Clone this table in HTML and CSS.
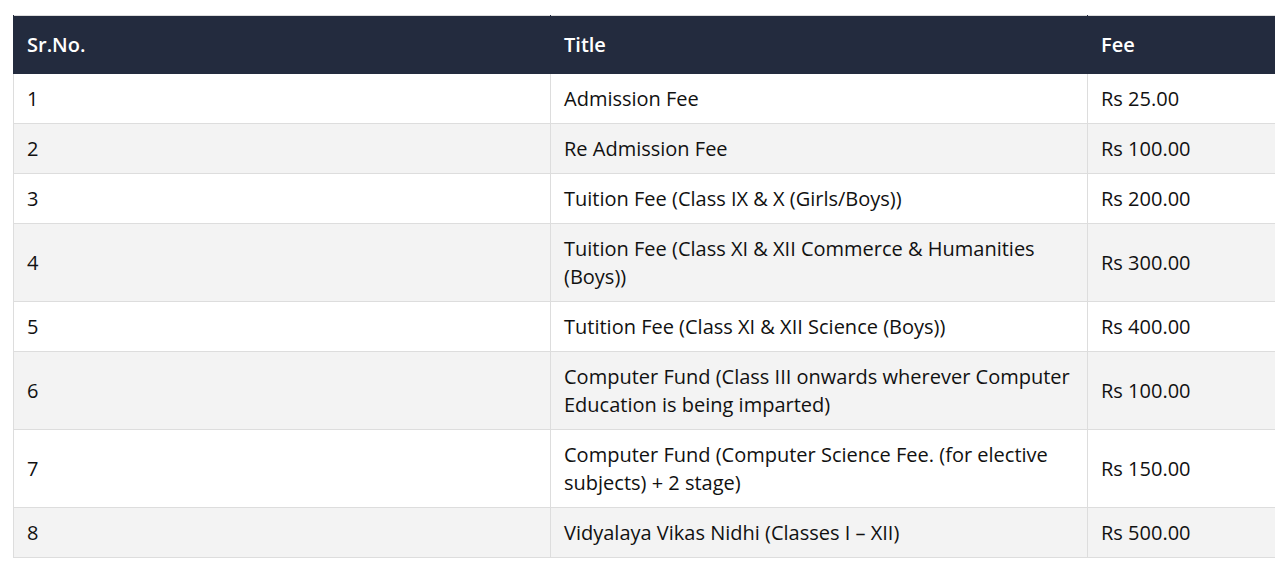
FILE: index.html
```html
<!DOCTYPE html>
<html>
<head>
<meta charset="utf-8">
<link rel="stylesheet" href="styles.css">
</head>
<body>
<table class="fees">
  <thead>
    <tr><th class="c1">Sr.No.</th><th class="c2">Title</th><th class="c3">Fee</th></tr>
  </thead>
  <tbody>
    <tr><td>1</td><td>Admission Fee</td><td>Rs 25.00</td></tr>
    <tr><td>2</td><td>Re Admission Fee</td><td>Rs 100.00</td></tr>
    <tr><td>3</td><td>Tuition Fee (Class IX &amp; X (Girls/Boys))</td><td>Rs 200.00</td></tr>
    <tr><td>4</td><td>Tuition Fee (Class XI &amp; XII Commerce &amp; Humanities (Boys))</td><td>Rs 300.00</td></tr>
    <tr><td>5</td><td>Tutition Fee (Class XI &amp; XII Science (Boys))</td><td>Rs 400.00</td></tr>
    <tr><td>6</td><td>Computer Fund (Class III onwards wherever Computer Education is being imparted)</td><td>Rs 100.00</td></tr>
    <tr><td>7</td><td>Computer Fund (Computer Science Fee. (for elective subjects) + 2 stage)</td><td>Rs 150.00</td></tr>
    <tr><td>8</td><td>Vidyalaya Vikas Nidhi (Classes I – XII)</td><td>Rs 500.00</td></tr>
  </tbody>
</table>
</body>
</html>
```
FILE: styles.css
```css
html, body {
  margin: 0;
  padding: 0;
  overflow: hidden;
  background: #ffffff;
}
body {
  padding: 15px 0 0 13px;
  font-family: "Open Sans", "Liberation Sans", sans-serif;
  color: #111111;
}
.fees {
  border-collapse: collapse;
  table-layout: fixed;
  width: 1262px;
  font-size: 20px;
  line-height: 28px;
  border-top: 1px solid #dddddd;
}
.fees th, .fees td {
  border: 1px solid #dddddd;
  text-align: left;
  vertical-align: middle;
  padding: 11px 13px 10px 13px;
}
.fees th:last-child, .fees td:last-child {
  border-right: none;
}
.fees th {
  background: #232b3e;
  color: #ffffff;
  font-weight: 600;
  height: 36px;
  border-color: #232b3e;
  border-top: none;
}
.fees .c1, .fees .c2 { width: 510px; }
.fees tbody tr:nth-child(even) td { background: #f3f3f3; }
```
